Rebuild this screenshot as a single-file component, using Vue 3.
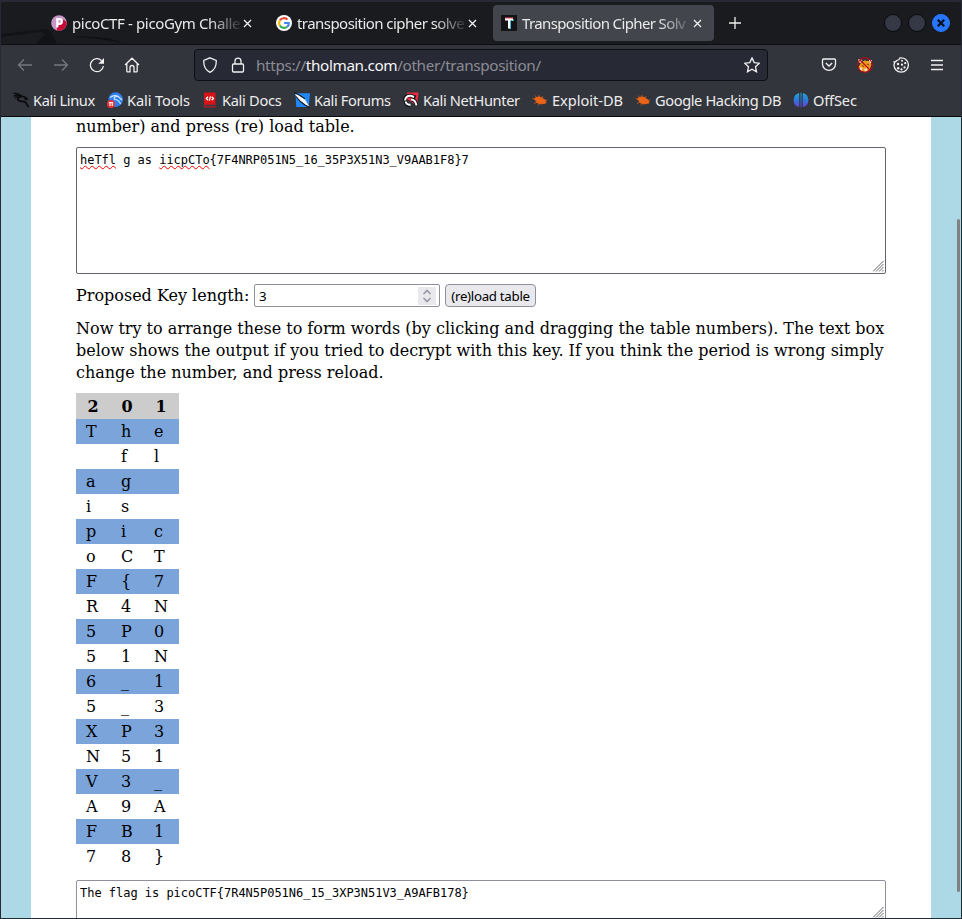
<script setup>
const tabs = [
  { title: 'picoCTF - picoGym Challe', icon: 'pico', cls: 'first' },
  { title: 'transposition cipher solve', icon: 'google', cls: 'second' },
  { title: 'Transposition Cipher Solv', icon: 'tee', cls: 'active' },
]
const bookmarks = [
  { label: 'Kali Linux', icon: 'dragon', width: 94, tracking: -0.4 },
  { label: 'Kali Tools', icon: 'tools', width: 95, tracking: -0.12 },
  { label: 'Kali Docs', icon: 'docs', width: 92, tracking: -0.3 },
  { label: 'Kali Forums', icon: 'forums', width: 109, tracking: -0.36 },
  { label: 'Kali NetHunter', icon: 'hunter', width: 129, tracking: -0.34 },
  { label: 'Exploit-DB', icon: 'bug', width: 103, tracking: -0.02 },
  { label: 'Google Hacking DB', icon: 'bug', width: 158, tracking: -0.38 },
  { label: 'OffSec', icon: 'offsec', width: 80, tracking: -0.15 },
]
const header = ['2', '0', '1']
const rows = [
  'The', ' fl', 'ag ', 'is ', 'pic', 'oCT', 'F{7', 'R4N', '5P0', '51N',
  '6_1', '5_3', 'XP3', 'N51', 'V3_', 'A9A', 'FB1', '78}',
].map((r) => r.split(''))
</script>

<template>
  <div class="window">
    <header class="tabbar">
      <svg class="theme-art" width="130" height="16" viewBox="0 0 130 16">
        <path d="M0 6L44 1L49 3L56 16H0Z" fill="#121317" />
        <path d="M0 9L40 4L44 6L35 16H0Z" fill="#1b1c20" />
        <path d="M70 9Q105 7 122 15Q98 10 70 9Z" fill="#101115" />
      </svg>
      <div v-for="t in tabs" :key="t.title" class="tab" :class="t.cls">
        <svg v-if="t.icon === 'pico'" class="fav" viewBox="0 0 16 16">
          <circle cx="8" cy="8" r="7.8" fill="#c795c6" />
          <path d="M6 12L12.5 4.5L15.5 7A7.8 7.8 0 0 1 6 15.5Z" fill="#c50a35" />
          <path d="M6.3 12.6V4.2H8.6A2.3 2.3 0 0 1 8.6 8.8H6.3" fill="none" stroke="#fff" stroke-width="2.2" />
        </svg>
        <svg v-else-if="t.icon === 'google'" class="fav" viewBox="0 0 16 16">
          <circle cx="8" cy="8" r="8" fill="#fff" />
          <g fill="none" stroke-width="2.1">
            <path d="M3.9 5.4A4.9 4.9 0 0 1 11.5 4.6" stroke="#ea4335" />
            <path d="M3.9 5.3A4.9 4.9 0 0 0 3.9 10.7" stroke="#fbbc05" />
            <path d="M3.9 10.6A4.9 4.9 0 0 0 11.2 11.7" stroke="#34a853" />
            <path d="M11.2 11.7Q13 10.2 12.8 8H8.1" stroke="#4285f4" />
          </g>
        </svg>
        <svg v-else class="fav" viewBox="0 0 16 16">
          <path d="M0 0H16V16H0Z" fill="#141414" />
          <path d="M4 2.5H12V4.5H4Z" fill="#ec4e5b" />
          <path d="M8.5 5H10V14H8.5ZM11 4H12.7V6H11Z" fill="#39b8dc" />
          <path d="M4 3.5H12V5.5H9V13.5H7V5.5H4Z" fill="#fff" />
        </svg>
        <span class="tab-title">{{ t.title }}</span>
        <svg class="close" viewBox="0 0 9 9"><path d="M1 1L8 8M8 1L1 8" /></svg>
      </div>
      <svg class="plus" viewBox="0 0 12 12"><path d="M6 0V12M0 6H12" /></svg>
      <div class="controls">
        <i></i><i></i>
        <i class="quit"><svg viewBox="0 0 8 8"><path d="M.7 .7L7.3 7.3M7.3 .7L.7 7.3" /></svg></i>
      </div>
    </header>

    <nav class="toolbar">
      <svg class="nav dim" viewBox="0 0 16 16"><path d="M15 8H1.5M7 2.5L1.5 8L7 13.5" /></svg>
      <svg class="nav dim" viewBox="0 0 16 16"><path d="M1 8H14.5M9 2.5L14.5 8L9 13.5" /></svg>
      <svg class="nav" viewBox="0 0 16 16"><path d="M12.6 3.6A6.5 6.5 0 1 0 14.4 9" /><path d="M9.3 6.7H15V1Z" class="solid" /></svg>
      <svg class="nav home" viewBox="0 0 16 16"><path d="M1 8L8 1.2L15 8M2.8 6.7V14.2Q2.8 14.9 3.5 14.9H6V10.5A2 2 0 0 1 10 10.5V14.9H12.5Q13.2 14.9 13.2 14.2V6.7" /></svg>
      <div class="urlbar">
        <svg class="shield" viewBox="0 0 16 16"><path d="M8 .8L14.2 3.4Q14.8 12 8 15.3Q1.2 12 1.8 3.4Z" /></svg>
        <svg class="lock" viewBox="0 0 14 16"><path d="M4 7V4.2A3 3 0 0 1 10 4.2V7M2.5 7H11.5Q12.5 7 12.5 8V14Q12.5 15 11.5 15H2.5Q1.5 15 1.5 14V8Q1.5 7 2.5 7Z" /></svg>
        <span class="url">https://<b>tholman.com</b>/other/transposition/</span>
        <svg class="star" viewBox="0 0 16 16"><path d="M8 .9L10.2 5.6L15.3 6.2L11.5 9.7L12.5 14.8L8 12.3L3.5 14.8L4.5 9.7L.7 6.2L5.8 5.6Z" /></svg>
      </div>
      <div class="extensions">
        <svg viewBox="0 0 16 16"><path d="M2.5 2H13.5Q14.5 2 14.5 3V7A6.5 6.3 0 0 1 1.5 7V3Q1.5 2 2.5 2ZM4.8 6L8 9L11.2 6" /></svg>
        <svg viewBox="0 0 16 16">
          <path d="M4 6L8 3L12 4L14.5 7L12.5 13L8 15L3.5 14L1.5 10Z" fill="#f09a1c" stroke="none" />
          <path d="M1 2.5L4 2L5.5 4L3.5 6L1.5 5ZM12 3L15 3L15 6L12.5 6ZM3 10L5.5 11L5 14L3 13ZM7 12L10 11L10 14L8 14.5Z" fill="#e9ddc8" stroke="none" />
          <path d="M6 1L12 2L10 4L7 3Z" fill="#31343a" stroke="none" />
          <path d="M5 8.5L7 9.5M10 7L12 8" stroke="#8c4d0e" />
          <circle cx="8" cy="8" r="7.3" stroke="#c40812" stroke-width="1.1" /><path d="M3 3L13 13" stroke="#c40812" stroke-width="1.1" />
        </svg>
        <svg viewBox="0 0 16 16">
          <path d="M7 .9A7.2 7.2 0 1 1 1 7.5Q1.8 6.3 1.2 5Q3 5.2 3.6 3.6Q5.8 3.5 7 .9Z" />
          <g class="solid"><circle cx="9" cy="3.8" r="1" /><circle cx="5" cy="7" r="1.2" /><circle cx="9" cy="7.7" r="1.1" /><circle cx="12.2" cy="6.2" r="1.1" /><circle cx="5.2" cy="11.2" r="1.2" /><circle cx="11.5" cy="10.4" r="1.1" /><circle cx="8.5" cy="12.4" r="1.1" /></g>
        </svg>
        <svg viewBox="0 0 16 16"><path d="M2 3.5H14M2 8H14M2 12.5H14" /></svg>
      </div>
    </nav>

    <nav class="bookmarks">
      <div v-for="b in bookmarks" :key="b.label" class="bookmark" :style="{ width: b.width + 'px', letterSpacing: b.tracking + 'px' }">
        <svg viewBox="0 0 16 16">
          <g v-if="b.icon === 'dragon'" fill="none" stroke="#0a0b0d">
            <path d="M.5 1.2L5 2L9 4.2M.5 4.2L3.5 3.4L8 4.3L12 5L15 7.5" stroke-width="1.5" />
            <path d="M8.5 4.3Q4 5.5 5 8Q6 9.7 9.5 9.3Q13 9.5 13.6 12L15.6 15" stroke-width="1.8" />
            <path d="M2 6.3L5 4.5M11 5.5L13.5 8.2" />
          </g>
          <g v-else-if="b.icon === 'tools'">
            <circle cx="8.7" cy="7.6" r="7.3" fill="#2f80ee" />
            <path d="M3 5.5Q7 2.5 11 4.3L15 8M10.5 4.5Q6 5 7.5 7.5Q12 7.5 13.5 12" fill="none" stroke="#d7edff" stroke-width="1.1" />
            <circle cx="4" cy="12" r="4" fill="#e8323a" /><path d="M3 10.2V14M5.3 10.2V14M1.8 10.7H6.2" stroke="#ffe1e1" />
          </g>
          <g v-else-if="b.icon === 'docs'">
            <path d="M2 1.5Q2 .5 3 .5H13.5V15.5H3Q2 15.5 2 14Z" fill="#d61418" /><path d="M2.8 12.8H13.5V14.6H3Z" fill="#393940" />
            <path d="M6 4.8L4.3 6.5L6 8.2M9.7 4.8L11.4 6.5L9.7 8.2M8.5 4.3L7.3 8.7" fill="none" stroke="#fff" />
          </g>
          <g v-else-if="b.icon === 'forums'">
            <path d="M1.5 1.2H16L14.8 13.5L14 15H2.3Z" fill="#1f88f5" />
            <path d="M1 2L5 3.3L11 7.4L15.5 15L10.5 12.2L6 9.2L3 5.5Z" fill="#f6f8fc" />
            <path d="M0 .5L4 2.3L11 6.8M2 4.5L6.5 9.5L11 13L15.5 15.5" fill="none" stroke="#15171d" stroke-width="1.1" />
          </g>
          <g v-else-if="b.icon === 'hunter'">
            <path d="M4 .5H15.5L14 14L10 11L4 7Z" fill="#ee2b3e" />
            <path d="M1.5 9Q1.5 3.2 8 3.5L12.5 5.5M2.5 9Q3 13.5 7 13.5M8 8Q13 7 13.5 14" fill="none" stroke="#111216" stroke-width="3.6" />
            <path d="M2 8.5Q2.5 3.5 8 3.8L11 5M2.6 9.5Q4 13.5 7.5 12.5M8 7.5Q12.5 7.5 13.5 13.5" fill="none" stroke="#fff" stroke-width="1.9" />
          </g>
          <g v-else-if="b.icon === 'bug'" fill="#ea6418" stroke="#ea6418" stroke-width=".7">
            <path d="M2.5 6.5Q6 3.5 10 5.8L13.5 8.5L14 11Q9 13 5 10.8Z" /><path d="M5 6L3 3.5M7.5 5L6.5 3M3.5 7.5L.5 6.5M5 10L2 11.5M8 11L6 13.5M11 5.5L10 4M12 8L15 8.5" />
          </g>
          <g v-else>
            <defs><linearGradient id="offsec-fill" x1="0" y1="0" x2="0" y2="1"><stop offset="0" stop-color="#20a8cf" /><stop offset=".5" stop-color="#2b78dc" /><stop offset="1" stop-color="#6d3fd8" /></linearGradient></defs>
            <path d="M6.2 .9V15.1A7.3 7.3 0 0 1 6.2 .9ZM9.8 .9V15.1A7.3 7.3 0 0 0 9.8 .9ZM7.5 .7H8.5V15.3H7.5Z" fill="url(#offsec-fill)" />
          </g>
        </svg>
        <span>{{ b.label }}</span>
      </div>
    </nav>

    <main class="viewport">
      <article class="page">
        <p class="intro">number) and press (re) load table.</p>
        <div class="box input-box">
          <span class="typo">heTfl</span> g as <span class="typo">iicpCTo</span>{7F4NRP051N5_16_35P3X51N3_V9AAB1F8}7
          <svg class="grip" viewBox="0 0 11 11"><path d="M0 10.5L10.5 0M3 10.5L10.5 3M6 10.5L10.5 6M9 10.5L10.5 9" /></svg>
        </div>
        <div class="controls-row">
          <label>Proposed Key length:</label>
          <div class="number">3<span class="spin"><svg viewBox="0 0 10 14"><path d="M1.5 5L5 1.5L8.5 5M1.5 9L5 12.5L8.5 9" /></svg></span></div>
          <button>(re)load table</button>
        </div>
        <p class="help">Now try to arrange these to form words (by clicking and dragging the table numbers). The text box<br>below shows the output if you tried to decrypt with this key. If you think the period is wrong simply<br>change the number, and press reload.</p>
        <table>
          <thead><tr><th v-for="h in header" :key="h">{{ h }}</th></tr></thead>
          <tbody><tr v-for="(r, i) in rows" :key="i"><td v-for="(c, j) in r" :key="j">{{ c }}</td></tr></tbody>
        </table>
        <div class="box output-box">
          The flag is picoCTF{7R4N5P051N6_15_3XP3N51V3_A9AFB178}
          <svg class="grip" viewBox="0 0 11 11"><path d="M0 10.5L10.5 0M3 10.5L10.5 3M6 10.5L10.5 6M9 10.5L10.5 9" /></svg>
        </div>
      </article>
      <div class="scroll-thumb"></div>
    </main>
  </div>
</template>

<style>
body { margin: 0; overflow: hidden; background: #272935; }
</style>
<style scoped>
* { box-sizing: border-box; }
.window { width: 962px; height: 919px; display: flex; flex-direction: column; border: 1px solid #272935; border-top: 2px solid #272935; overflow: hidden; border-radius: 3px 3px 0 0; font-family: "Noto Sans", sans-serif; background: #33353d; }
svg { display: block; flex: none; fill: none; stroke: #f0f0f0; stroke-width: 1.3; }
.fav, .bookmark svg { stroke: none; }
.theme-art { position: absolute; left: 0; bottom: 0; stroke: none; }
.tabbar { position: relative; height: 43px; flex: none; display: flex; align-items: center; background: #1a1b1f; border-bottom: 1px solid #0d0e11; }
.tab { height: 36px; display: flex; align-items: center; font-size: 15px; color: #e9e9e9; border-radius: 4px; position: relative; }
.tab.first { width: 225px; margin-left: 42px; padding-left: 8px; letter-spacing: -.36px; }
.tab.second { width: 225px; padding-left: 8px; letter-spacing: -.55px; }
.tab.active { width: 221px; padding-left: 8px; background: #42454c; letter-spacing: -.62px; }
.fav { width: 16px; height: 16px; margin-right: 5px; }
.tab-title { width: 169px; white-space: nowrap; -webkit-mask-image: linear-gradient(90deg, #000 137px, transparent 172px); mask-image: linear-gradient(90deg, #000 137px, transparent 172px); }
.close { width: 9px; height: 9px; margin-left: 2px; }
.plus { width: 12px; height: 12px; margin-left: 15px; }
.controls { margin-left: auto; display: flex; gap: 6px; padding-right: 11px; }
.controls i { width: 18px; height: 18px; border-radius: 50%; background: #343945; border: 1px solid #090a0d; display: grid; place-items: center; }
.controls .quit { background: #2776ff; border-color: #2776ff; }
.quit svg { width: 8px; height: 8px; stroke: #08111f; stroke-width: 2.2; }
.toolbar { height: 40px; flex: none; display: flex; align-items: center; padding-left: 16px; }
.nav { width: 16px; height: 16px; margin-right: 20px; }
.dim { stroke: #75777c; }
.solid { fill: #f0f0f0; stroke: none; }
.home { margin-left: -1px; }
.urlbar { width: 574px; height: 32px; margin-left: 34px; display: flex; align-items: center; padding: 0 7px 0 7px; border: 1px solid #0e0f13; border-radius: 4px; background: #272935; }
.shield { width: 16px; height: 16px; }
.lock { width: 14px; height: 16px; margin-left: 13px; }
.url { margin-left: 11px; font-size: 15.3px; letter-spacing: -.37px; color: #8b8c94; white-space: nowrap; }
.url b { font-weight: 400; color: #f5f5f5; }
.star { width: 16px; height: 16px; margin-left: auto; }
.extensions { display: flex; gap: 20px; margin-left: 53px; }
.extensions svg { width: 16px; height: 16px; }
.bookmarks { height: 32px; flex: none; display: flex; align-items: center; padding: 0 0 1px 12px; border-bottom: 1px solid #09090b; }
.bookmark { flex: none; display: flex; align-items: center; gap: 4px; white-space: nowrap; font-size: 14.6px; color: #ededed; }
.bookmark svg { width: 16px; height: 16px; }
.viewport { position: relative; flex: 1; min-height: 0; overflow: hidden; background: #add8e6; display: flex; justify-content: center; }
.page { width: 900px; height: 801px; overflow: hidden; background: #fff; padding: 0 45px; font: 16px/22px "DejaVu Serif", serif; color: #000; }
p { margin: 0; white-space: nowrap; }
.intro { height: 30px; line-height: 19px; }
.box { position: relative; width: 810px; height: 127px; border: 1px solid #66636f; border-radius: 2px; padding: 5px 3px; font: 12px/15px "DejaVu Sans Mono", monospace; letter-spacing: -.025px; white-space: nowrap; }
.typo { text-decoration: underline wavy red 1px; text-underline-offset: 1px; text-decoration-skip-ink: none; }
.grip { position: absolute; right: 1px; bottom: 1px; width: 11px; height: 11px; stroke: #666; stroke-width: 1; }
.controls-row { display: flex; align-items: center; height: 23px; margin-top: 10px; }
label { width: 178px; white-space: nowrap; }
.number { width: 186px; height: 23px; border: 1px solid #8f8f9d; border-radius: 2px; padding: 2px 3px 2px 4px; display: flex; justify-content: space-between; align-items: center; font: 13.3px/18px "Noto Sans", sans-serif; }
.spin { width: 18px; height: 18px; background: #e9e9ed; display: grid; place-items: center; }
.spin svg { width: 10px; height: 14px; stroke: #9898a4; stroke-width: 1.6; }
button { width: 91px; height: 23px; margin: 0 0 0 5px; padding: 0; border: 1px solid #8f8f9d; border-radius: 4px; background: #e9e9ed; color: #000; font: 13.3px/18px "Noto Sans", sans-serif; letter-spacing: -.3px; white-space: nowrap; }
.help { margin-top: 11px; }
table { margin-top: 9px; border-collapse: collapse; border-spacing: 0; width: 103px; table-layout: fixed; line-height: 19px; }
th, td { padding: 3px 0 3px 10px; text-align: left; height: 25px; white-space: pre; }
th { height: 26px; background: #ccc; padding-left: 11.5px; }
th:nth-child(1) { width: 35px; }
th:nth-child(2) { width: 33px; padding-left: 10.5px; }
tbody tr:nth-child(odd) { background: #7ba5da; }
.output-box { margin-top: 11px; border-color: #8f8f9d; height: 40px; }
.scroll-thumb { position: absolute; right: 1px; top: 102px; width: 3px; height: 673px; background: #7f8184; border-radius: 2px; }
</style>
